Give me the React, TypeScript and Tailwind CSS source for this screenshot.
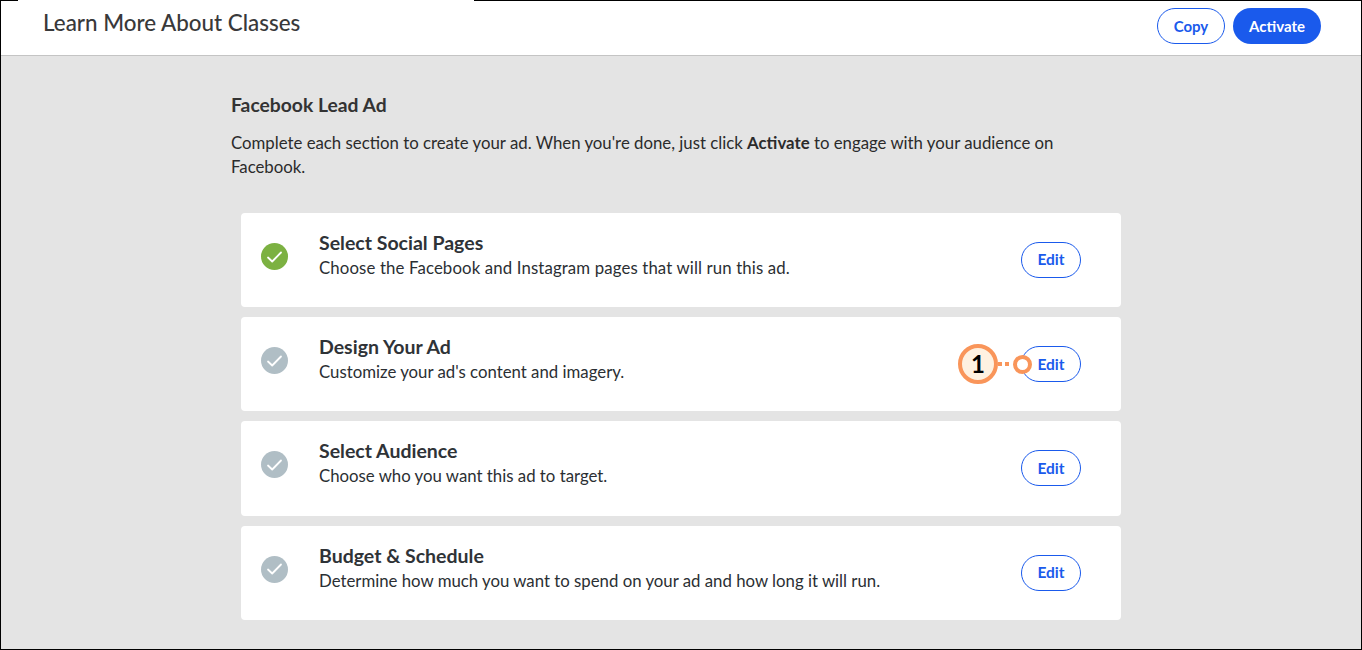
const sections = [
  { title: "Select Social Pages", desc: "Choose the Facebook and Instagram pages that will run this ad.", done: true, descClass: "tracking-[0.13px]" },
  { title: "Design Your Ad", desc: "Customize your ad's content and imagery.", marker: true },
  { title: "Select Audience", desc: "Choose who you want this ad to target." },
  { title: "Budget & Schedule", desc: "Determine how much you want to spend on your ad and how long it will run." },
];

const Check = ({ done }: { done?: boolean }) => (
  <div className={`w-[27px] h-[27px] rounded-full flex items-center justify-center ${done ? "bg-[#7cb142]" : "bg-[#b0bec5]"}`}>
    <svg width="17" height="14" viewBox="0 0 17 14" fill="none">
      <path d="M2 7.5L6.2 11.5L15 2.5" stroke="white" strokeWidth="1.8" strokeLinecap="round" strokeLinejoin="round" />
    </svg>
  </div>
);

export default function App() {
  return (
    <div className="relative w-[1362px] h-[650px] border border-black bg-[#e4e4e4] text-[#2b2b2b] font-['Lato','Noto_Sans',sans-serif]">
      {/* gap in the top border */}
      <div className="absolute -top-px left-[17px] w-[456px] h-px bg-white" />

      <header className="h-[55px] bg-white border-b border-[#c4c4c4] flex items-start justify-between pl-[42px] pr-[40px]">
        <h1 className="mt-[8px] text-[22.4px] leading-[28px] font-medium text-[#39393a]">Learn More About Classes</h1>
        <div className="flex gap-2 mt-[7px]">
          <button className="w-[68px] h-[36px] rounded-full bg-white border border-[#1a5aec] text-[#1a5aec] text-[15px] font-bold">Copy</button>
          <button className="w-[88px] h-[36px] rounded-full bg-[#1a5aec] text-white text-[15px] font-bold">Activate</button>
        </div>
      </header>

      <main className="pl-[230px] pt-[37px]">
        <h2 className="text-[19.3px] leading-[24px] font-bold text-[#333]">Facebook Lead Ad</h2>
        <p className="mt-[14px] w-[840px] text-[16.8px] leading-[24px]">
          Complete each section to create your ad. When you're done, just click <b>Activate</b> to engage with your audience on Facebook.
        </p>

        <div className="mt-[34px] ml-[10px] w-[880px] flex flex-col gap-[10px]">
          {sections.map((s) => (
            <div key={s.title} className="relative h-[94.2px] bg-white rounded-[4px] flex items-start pl-[20px] pr-[40px]">
              <div className="mt-[30px]"><Check done={s.done} /></div>
              <div className="ml-[31px] mt-[17px] flex-1">
                <div className="text-[19.5px] leading-[25px] font-bold text-[#2f3337]">{s.title}</div>
                <div className={`text-[16.8px] leading-[25px] text-[#2b2f33] ${s.descClass ?? ""}`}>{s.desc}</div>
              </div>
              <button className="mt-[29px] w-[60px] h-[36px] rounded-full bg-white border border-[#1a5aec] text-[#1a5aec] text-[15.5px] font-bold">Edit</button>
              {s.marker && (
                <div className="absolute left-[717px] top-[27px] flex items-center">
                  <div className="w-[40px] h-[40px] rounded-full border-[4px] border-[#f9955a] bg-[#fef1e1] flex items-center justify-center text-[24px] font-bold text-black">1</div>
                  <div className="flex gap-[3px]">
                    <span className="w-[4px] h-[4px] bg-[#f9955a]" />
                    <span className="w-[4px] h-[4px] bg-[#f9955a]" />
                  </div>
                  <div className="ml-[4px] w-[19px] h-[19px] rounded-full border-[4px] border-[#f9955a] bg-white" />
                </div>
              )}
            </div>
          ))}
        </div>
      </main>
    </div>
  );
}
